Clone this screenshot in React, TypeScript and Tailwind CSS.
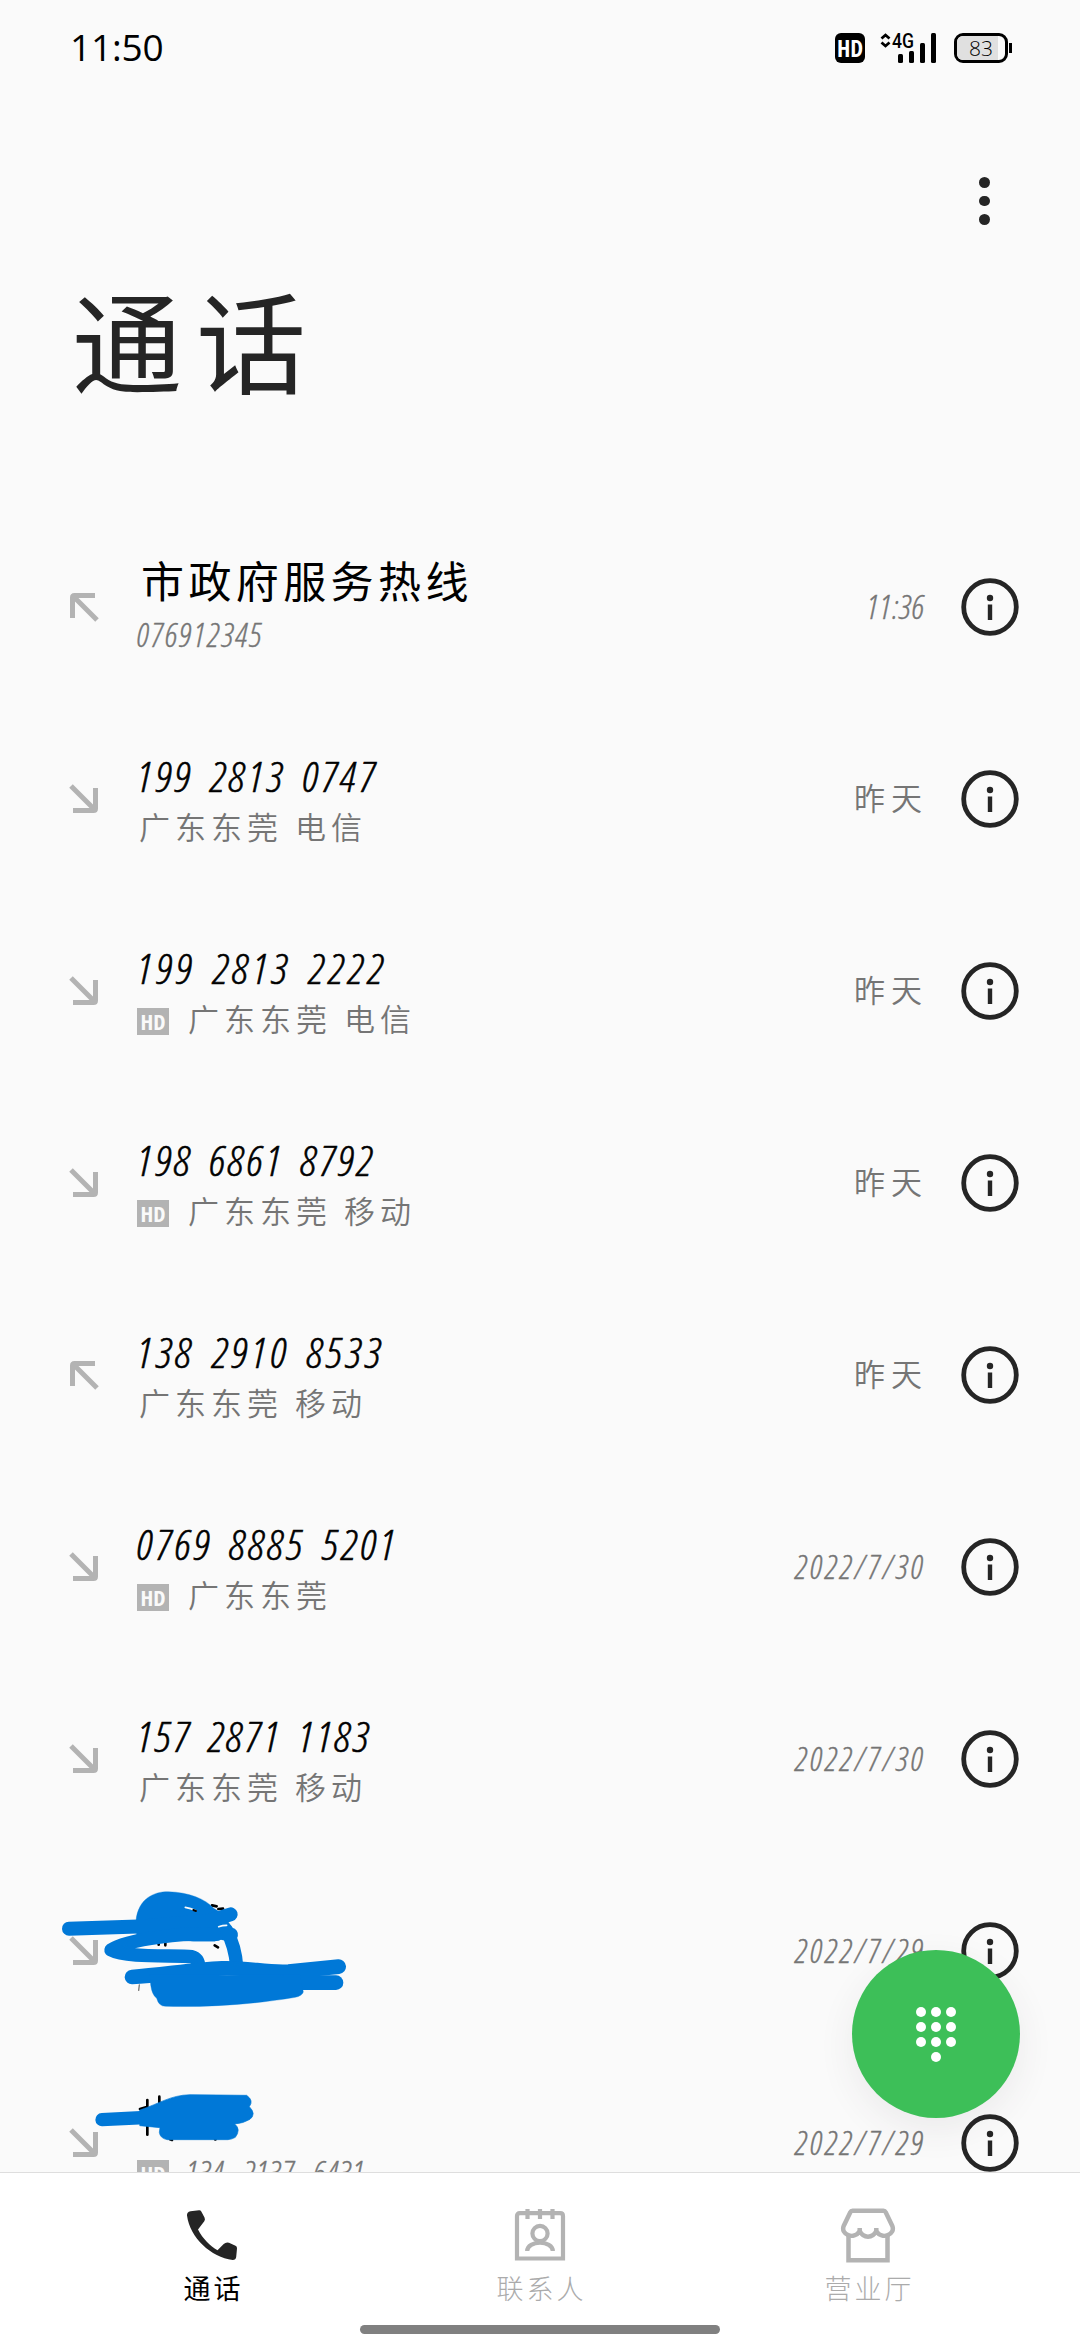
import { clsx } from "clsx";

interface Call {
  name: string;
  sub?: string;
  time: string;
  outgoing?: boolean;
  hd?: boolean;
  nameClass?: string;
  subClass?: string;
}

const DIGITS = "font-['Open_Sans','Noto_Sans_CJK_SC',sans-serif] italic font-light [font-stretch:75%]";
const HAN = "font-['Noto_Sans_CJK_SC',sans-serif]";

const CALLS: Call[] = [
  { name: "市政府服务热线", sub: "076912345", time: "11:36", outgoing: true, nameClass: "pl-[4px]", subClass: "tracking-[2.2px]" },
  { name: "199 2813 0747", sub: "广东东莞 电信", time: "昨天", nameClass: "tracking-[3.4px]" },
  { name: "199 2813 2222", sub: "广东东莞 电信", time: "昨天", hd: true, nameClass: "tracking-[4.1px]" },
  { name: "198 6861 8792", sub: "广东东莞 移动", time: "昨天", hd: true, nameClass: "tracking-[3.2px]" },
  { name: "138 2910 8533", sub: "广东东莞 移动", time: "昨天", outgoing: true, nameClass: "tracking-[3.9px]" },
  { name: "0769 8885 5201", sub: "广东东莞", time: "2022/7/30", hd: true, nameClass: "tracking-[3.5px]" },
  { name: "157 2871 1183", sub: "广东东莞 移动", time: "2022/7/30", nameClass: "tracking-[2.9px]" },
  { name: "", time: "2022/7/29" },
  { name: "", sub: "134 2137 6431", time: "2022/7/29", hd: true, subClass: "tracking-[1px]" },
];

const isHan = (s: string) => /[\u4e00-\u9fff]/.test(s);

function StatusBar() {
  return (
    <div className="h-[96px] shrink-0 flex items-center justify-between pl-[70px] pr-[68px]">
      <span className="pb-[3px] font-['Open_Sans',sans-serif] text-[37px] leading-none tracking-[-0.2px] text-black">11:50</span>
      <div className="flex items-center">
        <span className="w-[30px] h-[30px] rounded-[6px] bg-black text-white flex items-center justify-center font-['Open_Sans',sans-serif] font-bold [font-stretch:75%] text-[23px] leading-none">
          HD
        </span>
        <svg className="ml-[15px] overflow-visible" width="57" height="32" viewBox="0 0 57 32">
          <path d="M1.5 6.5 5.5 3l4 3.5M1.5 10.5l4 3.5 4-3.5" fill="none" stroke="#000" strokeWidth="2.8" />
          <text x="12" y="15.5" fontFamily="Roboto, sans-serif" fontWeight="500" fontSize="20" textLength="22" lengthAdjust="spacingAndGlyphs">4G</text>
          <rect x="18" y="22" width="5" height="9" rx="1.5" />
          <rect x="29" y="19" width="5" height="12" rx="1.5" />
          <rect x="40" y="11" width="5" height="20" rx="1.5" />
          <rect x="51" y="1" width="5" height="30" rx="1.5" />
        </svg>
        <div className="ml-[17px] relative w-[54px] h-[30px] rounded-[9px] border-[3px] border-black overflow-hidden flex items-center justify-center">
          <div className="absolute inset-y-0 left-0 w-[41px] bg-[#e0e0e0]" />
          <span className="relative font-['Open_Sans',sans-serif] font-light text-[21px] leading-none text-black">83</span>
        </div>
        <div className="ml-[1px] w-[3px] h-[10px] bg-black" />
      </div>
    </div>
  );
}

function DirectionArrow({ outgoing }: { outgoing?: boolean }) {
  return (
    <svg className={clsx("shrink-0 w-[30px] h-[30px]", !outgoing && "-scale-100")} viewBox="0 0 30 30" fill="none" stroke="#b3b3b3" strokeWidth="5">
      <path d="M3.5 26V5.5Q3.5 3.5 5.5 3.5H26M4 4 28 28" />
    </svg>
  );
}

function HdBadge() {
  return (
    <span className="w-[32px] h-[27px] shrink-0 mr-[17px] bg-[#b3b3b3] text-[#fafafa] flex items-center justify-center font-['Open_Sans',sans-serif] font-bold [font-stretch:75%] text-[22px] leading-none">
      HD
    </span>
  );
}

function InfoIcon() {
  return (
    <svg className="shrink-0" width="58" height="58" viewBox="0 0 58 58">
      <circle cx="29" cy="29" r="26.3" fill="none" stroke="#252525" strokeWidth="4.8" />
      <circle cx="29" cy="20" r="3.2" fill="#252525" />
      <rect x="26.8" y="26.5" width="4.4" height="15.5" fill="#252525" />
    </svg>
  );
}

function CallRow({ name, sub = "", time, outgoing, hd, nameClass, subClass }: Call) {
  return (
    <div className="h-[192px] shrink-0 flex items-center pl-[69px] pr-[61px]">
      <DirectionArrow outgoing={outgoing} />
      <div className={clsx("ml-[38px] flex-1 whitespace-nowrap", isHan(name) ? "pt-[4px]" : "pt-[8px]")}>
        <div
          className={clsx(
            "h-[52px] flex items-center leading-none text-black",
            isHan(name)
              ? `${HAN} pb-[7px] font-normal text-[43px] tracking-[4.4px]`
              : `${DIGITS} pb-[3px] text-[43px] [word-spacing:6px] [-webkit-text-stroke:0.6px_#000]`,
            nameClass,
          )}
        >
          {name}
        </div>
        <div className="h-[52px] flex items-center leading-none text-[#757575]">
          {hd && <HdBadge />}
          <span
            className={clsx(
              isHan(sub)
                ? `${HAN} pb-[7px] pl-[2px] font-[350] text-[31px] tracking-[5px]`
                : `${DIGITS} pb-[2px] text-[33px] [word-spacing:12px] [-webkit-text-stroke:0.4px_#757575]`,
              subClass,
            )}
          >
            {sub}
          </span>
        </div>
      </div>
      <span
        className={clsx(
          "leading-none text-[#757575]",
          isHan(time) ? `${HAN} mr-[33px] pb-[5px] font-[350] text-[31px] tracking-[6px]` : `${DIGITS} pb-[2px] text-[33px] [-webkit-text-stroke:0.4px_#757575]`,
          time.includes("/") && "mr-[35px] tracking-[3px]",
          time.includes(":") && "mr-[36px] tracking-[1px]",
        )}
      >
        {time}
      </span>
      <InfoIcon />
    </div>
  );
}

/* Marker scribbles that hide the two last callers */
function Scribbles() {
  return (
    <svg className="absolute left-[50px] top-[1880px] pointer-events-none" width="400" height="280" viewBox="0 540 1200 840" fill="none" strokeLinecap="round" strokeLinejoin="round">
      <g stroke="#000" strokeWidth="8">
        <path d="M486 616l14 3M505 627l14-1M505 680q22-10 34 0M494 736l10 6M346 720v16M326 730v4" />
        <path d="M292 1200v104M328 1190v20M270 1227l20-6M360 1318l6 2M495 1318h2" />
      </g>
      <path d="M268 855l-2 16" stroke="#777" strokeWidth="4" />
      <g stroke="#0078d7" fill="#0078d7">
        <path d="M258 662C264 592 318 574 355 575C417 577 467 597 491 625L516 640L545 680L495 724H430L260 710Z" strokeWidth="1" />
        <path d="M57 686L287 679L480 662L542 643M470 690L543 704" fill="none" strokeWidth="42" />
        <path d="M500 703C420 696 230 716 183 750C230 776 380 764 425 770Q446 776 446 800" fill="none" strokeWidth="40" />
        <path d="M530 692Q556 740 560 800" fill="none" strokeWidth="40" />
        <path d="M246 831C336 825 426 809 516 805C596 802 646 819 716 815L866 800" fill="none" strokeWidth="44" />
        <path d="M858 848H700" fill="none" strokeWidth="44" />
        <path d="M300 826H750L760 876Q756 888 736 892C606 914 466 922 346 919Q326 919 320 895Q306 885 302 855Z" strokeWidth="1" />
        <path d="M156 1259L316 1251L426 1231" fill="none" strokeWidth="40" />
        <path d="M270 1230C330 1210 360 1186 420 1184L590 1186Q612 1202 598 1220Q620 1242 600 1258Q580 1270 554 1272Q574 1288 556 1312Q546 1318 534 1319H352Q330 1315 328 1297L330 1283L270 1277Z" strokeWidth="2" />
      </g>
      <path d="M406 622q16 2 32 10M506 680q12-4 24-4" stroke="#fafafa" strokeWidth="5" />
      <path d="M430 630l8 3" stroke="#000" strokeWidth="6" />
    </svg>
  );
}

function DialButton() {
  return (
    <button className="absolute left-[852px] top-[1950px] w-[168px] h-[168px] rounded-full bg-[#3dbf58] shadow-[0_12px_36px_rgba(60,50,60,0.08)] flex items-center justify-center">
      <svg width="40" height="56" viewBox="0 0 40 56" fill="#fff">
        {[6, 21, 36].map((y) => [5, 20, 35].map((x) => <circle key={`${x}-${y}`} cx={x} cy={y} r="5" />))}
        <circle cx="20" cy="51" r="5" />
      </svg>
    </button>
  );
}

function PhoneIcon() {
  return (
    <svg width="56" height="56" viewBox="0 0 56 56" fill="#252525">
      <path d="M6.5 4.2 15 3.3q1.500-.2 2.300 1.200l3.200 6q1 2-.2 3.800L14 22.500C19 32 26 39 33.500 43.300l6.200-6.200Q42 34.800 45 35.800l6.500 3Q53.200 39.500 53 41.500l-.8 8.500q-.4 3-3.500 3C27 50 6 31 3 8.500Q2.700 5 6.500 4.200Z" />
    </svg>
  );
}

function ContactIcon() {
  return (
    <svg width="56" height="56" viewBox="0 0 56 56" fill="none" stroke="#b3b3b3" strokeWidth="4.2">
      <path d="M5 51.5V9q0-2.800 2.800-2.800h40.400Q51 6.200 51 9v42.500H5ZM15.500 2v10M28 2v10M40.500 2v10" />
      <circle cx="28" cy="26.5" r="7.6" />
      <path d="M15.2 44c0-11 25.600-11 25.600 0" />
    </svg>
  );
}

function ShopIcon() {
  return (
    <svg width="56" height="56" viewBox="0 0 56 56" fill="none" stroke="#b3b3b3" strokeWidth="4.5">
      <path d="M12.500 3.800h31q1.500 0 2.200 1.400l6.500 13.500C56 27.500 42 33.500 36.300 24v-3M36.300 24C32.500 31.500 23.500 31.500 19.700 24v-3M19.700 24C14 33.500 0 27.500 3.800 18.700l6.500-13.500q.7-1.400 2.200-1.400" />
      <path d="M8.500 28v25.200h39V28" />
    </svg>
  );
}

const TABS = [
  { label: "通话", icon: <PhoneIcon />, active: true },
  { label: "联系人", icon: <ContactIcon /> },
  { label: "营业厅", icon: <ShopIcon /> },
];

function BottomNav() {
  return (
    <nav className="h-[168px] shrink-0 relative bg-white border-t border-[#dedede] px-[48px] flex flex-col">
      <div className="flex-1 grid grid-cols-3 pt-[34px]">
        {TABS.map(({ label, icon, active }) => (
          <div key={label} className="flex flex-col items-center">
            {icon}
            <span className={clsx(HAN, "mt-[11px] text-[27px] leading-none tracking-[3px] mr-[-3px]", active ? "text-black font-normal" : "text-[#ababab] font-light")}>
              {label}
            </span>
          </div>
        ))}
      </div>
      <div className="self-center mb-[6px] w-[360px] h-[9px] rounded-full bg-[#808080]" />
    </nav>
  );
}

export default function App() {
  return (
    <div className="relative w-[1080px] h-[2340px] overflow-hidden bg-[#fafafa] flex flex-col">
      <StatusBar />

      <header className="h-[415px] shrink-0 flex flex-col">
        <button className="self-end mt-[81px] mr-[90px] flex flex-col gap-[8px]">
          <span className="w-[11px] h-[11px] rounded-full bg-[#252525]" />
          <span className="w-[11px] h-[10px] rounded-full bg-[#252525]" />
          <span className="w-[11px] h-[11px] rounded-full bg-[#252525]" />
        </button>
        <h1 className="mt-[58px] ml-[72px] font-['Noto_Sans_CJK_SC',sans-serif] font-normal text-[110px] leading-none tracking-[14px] text-[#252525]">
          通话
        </h1>
      </header>

      <main className="flex-1 min-h-0 overflow-hidden flex flex-col">
        {CALLS.map((call, i) => (
          <CallRow key={i} {...call} />
        ))}
      </main>

      <Scribbles />
      <DialButton />
      <BottomNav />
    </div>
  );
}
